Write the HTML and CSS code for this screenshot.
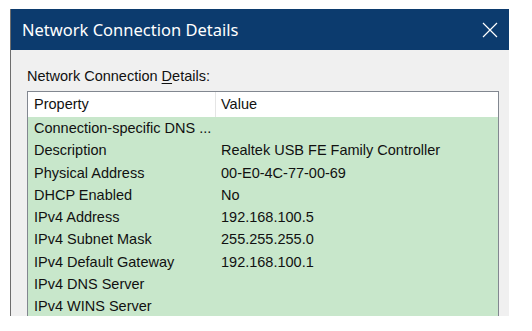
FILE: index.html
```html
<!DOCTYPE html>
<html lang="en">
<head>
  <meta charset="UTF-8" />
  <title>Network Connection Details</title>
  <link rel="stylesheet" href="styles.css">
</head>
<body>
  <div class="window">
    <div class="titlebar">
      <span class="title">Network Connection Details</span>
      <svg class="close" width="16" height="16" viewBox="0 0 16 16">
        <path d="M1 1 L15 15 M15 1 L1 15" stroke="#ffffff" stroke-width="1.2" fill="none" />
      </svg>
    </div>

    <div class="content">
      <div class="label">Network Connection <u>D</u>etails:</div>
      <div class="listview">
        <div class="row head">
          <div class="cell prop">Property</div>
          <div class="cell">Value</div>
        </div>
        <div class="row"><div class="cell prop">Connection-specific DNS ...</div><div class="cell"></div></div>
        <div class="row"><div class="cell prop">Description</div><div class="cell">Realtek USB FE Family Controller</div></div>
        <div class="row"><div class="cell prop">Physical Address</div><div class="cell">00-E0-4C-77-00-69</div></div>
        <div class="row"><div class="cell prop">DHCP Enabled</div><div class="cell">No</div></div>
        <div class="row"><div class="cell prop">IPv4 Address</div><div class="cell">192.168.100.5</div></div>
        <div class="row"><div class="cell prop">IPv4 Subnet Mask</div><div class="cell">255.255.255.0</div></div>
        <div class="row"><div class="cell prop">IPv4 Default Gateway</div><div class="cell">192.168.100.1</div></div>
        <div class="row"><div class="cell prop">IPv4 DNS Server</div><div class="cell"></div></div>
        <div class="row"><div class="cell prop">IPv4 WINS Server</div><div class="cell"></div></div>
      </div>
    </div>
  </div>
</body>
</html>
```

FILE: styles.css
```css
* { box-sizing: border-box; margin: 0; padding: 0; }
body { background: #ffffff; font-family: 'Liberation Sans', Arial, sans-serif; }

.window {
  margin: 9px 0 0 10px; width: 499px; height: 307px;
  background: #f0f0f0; border-left: 1px solid #6e6e6e; overflow: hidden;
}

.titlebar {
  height: 41px; background: #0c3b6e; color: #ffffff;
  display: flex; align-items: center; justify-content: space-between;
  padding: 0 11px 0 11px;
}
.title { font-family: 'Noto Sans', sans-serif; font-size: 16.5px; }
.close { display: block; }

.content { padding: 17px 10px 0 16px; }
.label { font-size: 14.5px; line-height: 18px; color: #111; margin-bottom: 6px; }
.label u { text-decoration-thickness: 1px; text-underline-offset: 2px; }

.listview { border: 1px solid #828790; background: #c8e7cb; height: 300px; }
.row { display: grid; grid-template-columns: 188px 1fr; height: 22.3px; font-size: 14.5px; line-height: 22.3px; color: #111; }
.row.head { height: 25px; line-height: 25px; background: #ffffff; }
.row.head .prop { border-right: 1px solid #e5e5e5; }
.cell { padding-left: 6px; white-space: nowrap; overflow: hidden; }
.row .cell + .cell { padding-left: 5px; }
```
